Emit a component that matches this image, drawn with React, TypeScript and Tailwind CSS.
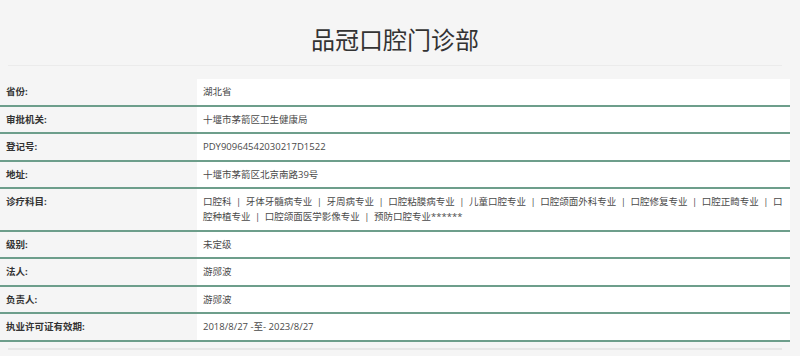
import { Fragment } from "react";

const rows: { label: string; value: React.ReactNode }[] = [
  { label: "省份:", value: "湖北省" },
  { label: "审批机关:", value: "十堰市茅箭区卫生健康局" },
  { label: "登记号:", value: "PDY90964542030217D1522" },
  { label: "地址:", value: "十堰市茅箭区北京南路39号" },
  { label: "诊疗科目:", value: null },
  { label: "级别:", value: "未定级" },
  { label: "法人:", value: "游郧波" },
  { label: "负责人:", value: "游郧波" },
  { label: "执业许可证有效期:", value: "2018/8/27 -至- 2023/8/27" },
];

// the list wraps inside "口腔种植专业" in the reference
const subjectLines = [
  ["口腔科", "牙体牙髓病专业", "牙周病专业", "口腔粘膜病专业", "儿童口腔专业", "口腔颌面外科专业", "口腔修复专业", "口腔正畸专业", "口"],
  ["腔种植专业", "口腔颌面医学影像专业", "预防口腔专业******"],
];

function Subjects() {
  return (
    <>
      {subjectLines.map((line, li) => (
        <div key={li} className="whitespace-nowrap">
          {line.map((s, i) => (
            <Fragment key={s}>
              {i > 0 && <span className="mx-[4.5px]">|</span>}
              {s}
            </Fragment>
          ))}
        </div>
      ))}
    </>
  );
}

export default function App() {
  return (
    <div
      className="min-h-screen bg-[#f5f5f5] text-[#333]"
      style={{ fontFamily: '"Open Sans", "Noto Sans CJK SC", sans-serif' }}
    >
      <div className="w-[790px]">
        <h1 className="pt-[26px] pb-[11px] text-center text-[24px] leading-[28px] font-normal text-[#333]">
          品冠口腔门诊部
        </h1>
        <div className="mx-2 h-px bg-[#ebebeb]" />

        <div className="mt-[13px] text-[9.5px] leading-[15px]">
          {rows.map((row) => (
            <div key={row.label} className="grid grid-cols-[197px_1fr] border-b-2 border-[#6d9e8b]">
              <div className="py-[5.25px] pl-[6px] font-bold text-[#333]">{row.label}</div>
              <div className="bg-white py-[5.25px] pr-[6px] pl-[6px] text-[#4a4a4a]">
                {row.value ?? <Subjects />}
              </div>
            </div>
          ))}
        </div>

        <div className="mx-2 mt-[6px] h-[2px] bg-[#e6e6e6]" />
      </div>
    </div>
  );
}
